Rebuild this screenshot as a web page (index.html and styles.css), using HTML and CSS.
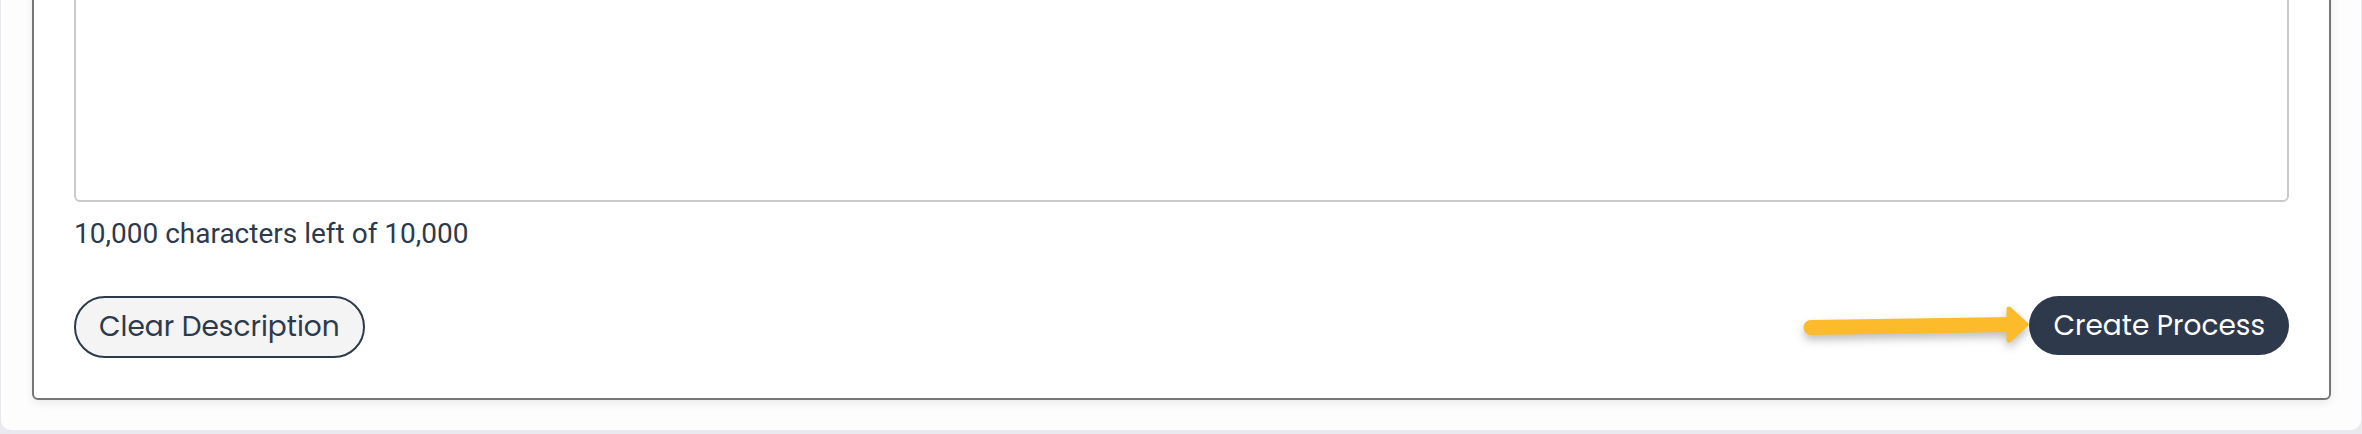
FILE: index.html
```html
<!DOCTYPE html>
<html lang="en">
	<head>
		<meta charset="UTF-8" />
		<meta name="viewport" content="width=device-width, initial-scale=1.0" />
		<title>Create Process</title>
		<link rel="stylesheet" href="styles.css">
	</head>
	<body>
		<div class="page">
			<div class="card">
				<textarea id="description" maxlength="10000"></textarea>
				<div class="counter" id="counter">10,000 characters left of 10,000</div>

				<div class="actions">
					<button class="btn btn-clear">Clear Description</button>
					<svg class="pointer" width="245" height="56" viewBox="0 0 245 56">
						<line x1="20" y1="31.5" x2="222" y2="28.5" stroke="#fbbb2a" stroke-width="15" stroke-linecap="round" />
						<polygon points="218,13 235,28.5 218,44" fill="#fbbb2a" stroke="#fbbb2a" stroke-width="5" stroke-linejoin="round" />
					</svg>
					<button class="btn btn-create">Create Process</button>
				</div>
			</div>
		</div>
	</body>
</html>
```

FILE: styles.css
```css
body {
	margin: 0;
	padding: 0 1px 4px;
	background: #e9e9ef;
	font-family: Roboto, sans-serif;
	color: #2d3a4b;
}
.page {
	margin-top: -110px;
	background: #fdfdfd;
	border-radius: 0 0 10px 10px;
	padding: 30px 30px 30px 31px;
}
.card {
	background: white;
	border: 2px solid #767676;
	border-radius: 6px;
	padding: 40px;
	box-shadow: 0 3px 8px rgba(0, 0, 0, 0.08);
}
textarea {
	display: block;
	width: 100%;
	height: 240px;
	box-sizing: border-box;
	border: 2px solid #cacaca;
	border-radius: 6px;
	resize: none;
}
.counter {
	margin-top: 14px;
	font-size: 28px;
	line-height: 36px;
}
.actions {
	position: relative;
	display: flex;
	justify-content: space-between;
	align-items: flex-start;
	margin-top: 44px;
}
.btn {
	font-family: Poppins, Inter, sans-serif;
	font-size: 28px;
	border-radius: 999px;
	padding: 0 23px;
	box-sizing: border-box;
	cursor: pointer;
}
.btn-clear {
	height: 62px;
	background: #f4f4f4;
	border: 2px solid #2d3a4b;
	color: #2d3a4b;
}
.btn-create {
	height: 59px;
	background: #2e3a4b;
	border: none;
	color: white;
	padding: 0 24px;
}
.pointer {
	position: absolute;
	top: 0;
	right: 253px;
	overflow: visible;
	filter: drop-shadow(0 5px 4px rgba(0, 0, 0, 0.25));
}
```
